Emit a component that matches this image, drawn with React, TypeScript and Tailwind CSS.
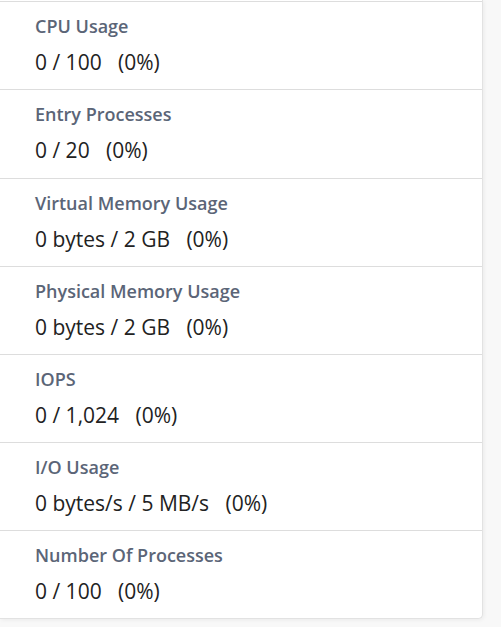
const rows = [
  { label: "CPU Usage", value: "0 / 100", pct: "(0%)" },
  { label: "Entry Processes", value: "0 / 20", pct: "(0%)" },
  { label: "Virtual Memory Usage", value: "0 bytes / 2 GB", pct: "(0%)" },
  { label: "Physical Memory Usage", value: "0 bytes / 2 GB", pct: "(0%)" },
  { label: "IOPS", value: "0 / 1,024", pct: "(0%)" },
  { label: "I/O Usage", value: "0 bytes/s / 5 MB/s", pct: "(0%)" },
  { label: "Number Of Processes", value: "0 / 100", pct: "(0%)" },
]

export default function App() {
  return (
    <div className="min-h-[627px] w-[501px] bg-[#f8f8f8] font-['Open_Sans',sans-serif]">
      <div className="w-[483px] bg-white pt-px rounded-br-[5px] border-r border-b border-[#e2e2e2] shadow-[1px_1px_4px_rgba(0,0,0,0.06)]">
        {rows.map((r, i) => (
          <div key={r.label}
            className={"border-t border-[#dddddd] pl-[35px] pt-3 flex flex-col gap-2.5 " + (i === 1 ? "pb-[14px]" : "pb-[13px]")}>
            <div className="text-[18px] leading-6 font-semibold text-[#5b6577]">{r.label}</div>
            <div className="text-[21px] leading-7 text-[#222222] whitespace-pre">
              {r.value}{"   "}{r.pct}
            </div>
          </div>
        ))}
      </div>
    </div>
  )
}
